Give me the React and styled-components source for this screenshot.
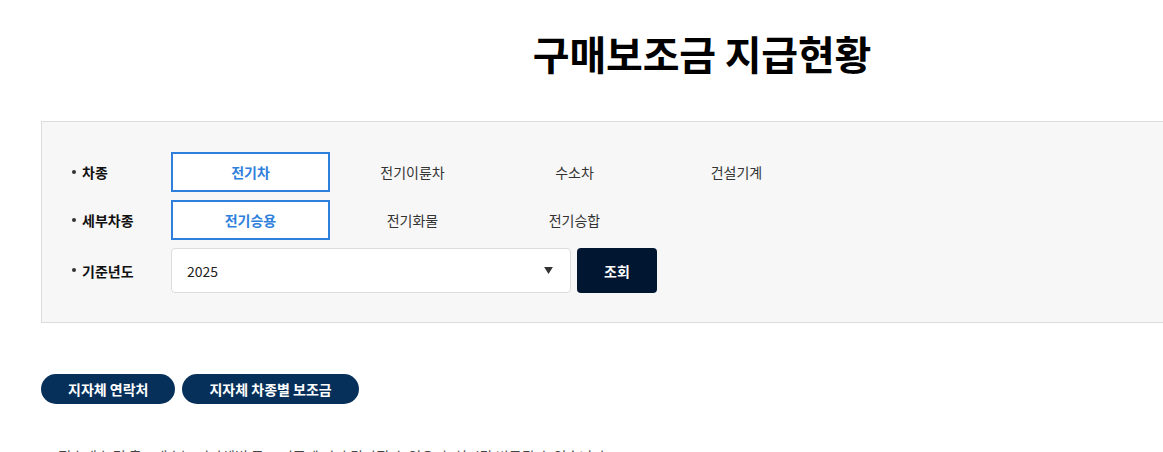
import React, { useState } from "react";
import styled, { createGlobalStyle } from "styled-components";

const GlobalStyle = createGlobalStyle`
  html, body {
    margin: 0;
    padding: 0;
    overflow: hidden;
    background: #fff;
  }
  body {
    font-family: "Noto Sans CJK KR", "Noto Sans", sans-serif;
    color: #222;
  }
  * {
    box-sizing: border-box;
  }
`;

const carTypes = ["전기차", "전기이륜차", "수소차", "건설기계"];
const subTypes = ["전기승용", "전기화물", "전기승합"];

const App = () => {
  const [carType, setCarType] = useState(0);
  const [subType, setSubType] = useState(0);

  return (
    <Page>
      <GlobalStyle />
      <Container>
        <Title>구매보조금 지급현황</Title>

        <SearchBox>
          <Row>
            <Label>차종</Label>
            <TabList>
              {carTypes.map((name, i) => (
                <Tab key={name} active={i === carType} onClick={() => setCarType(i)}>
                  {name}
                </Tab>
              ))}
            </TabList>
          </Row>
          <Row>
            <Label>세부차종</Label>
            <TabList>
              {subTypes.map((name, i) => (
                <Tab key={name} active={i === subType} onClick={() => setSubType(i)}>
                  {name}
                </Tab>
              ))}
            </TabList>
          </Row>
          <Row tall>
            <Label>기준년도</Label>
            <SelectBox>
              <span>2025</span>
              <Arrow viewBox="0 0 10 8">
                <path d="M0 0 H10 L5 8 Z" fill="#333" />
              </Arrow>
            </SelectBox>
            <SearchButton>조회</SearchButton>
          </Row>
        </SearchBox>

        <ButtonGroup>
          <PillButton>지자체 연락처</PillButton>
          <PillButton>지자체 차종별 보조금</PillButton>
        </ButtonGroup>

        <Notice>
          ※ 접수대수 및 출고대수는 지자체별 공고 기준에 따라 달라질 수 있으며, 실시간 변동될 수 있습니다.
        </Notice>
      </Container>
    </Page>
  );
};

const Page = styled.div`
  width: 100%;
  padding-left: 41px;
`;

const Container = styled.div`
  width: 1322px;
`;

const Title = styled.h2`
  margin: 33px 0 48px;
  font-size: 40px;
  line-height: 40px;
  font-weight: 700;
  letter-spacing: -0.2px;
  text-align: center;
  color: #000;
`;

const SearchBox = styled.section`
  display: flex;
  flex-direction: column;
  gap: 8px;
  padding: 30px 30px 29px;
  background: #f7f7f7;
  border: 1px solid #dcdcdc;
`;

const Row = styled.div`
  display: flex;
  align-items: center;
  height: ${(p) => (p.tall ? "45px" : "40px")};
`;

const Label = styled.div`
  display: flex;
  align-items: center;
  width: 99px;
  flex-shrink: 0;
  font-size: 14px;
  font-weight: 700;
  color: #111;

  &:before {
    content: "";
    width: 4px;
    height: 4px;
    border-radius: 50%;
    background: #333;
    margin-right: 6px;
    margin-top: -1px;
  }
`;

const TabList = styled.div`
  display: flex;
  gap: 3px;
`;

const Tab = styled.button`
  width: 159px;
  height: 40px;
  display: flex;
  align-items: center;
  justify-content: center;
  padding: 0;
  font-family: inherit;
  font-size: 14px;
  font-weight: ${(p) => (p.active ? 700 : 400)};
  color: ${(p) => (p.active ? "#2f7fdc" : "#333")};
  background: ${(p) => (p.active ? "#fff" : "transparent")};
  border: 2px solid ${(p) => (p.active ? "#2f7fdc" : "transparent")};
  cursor: pointer;
`;

const SelectBox = styled.div`
  width: 400px;
  height: 45px;
  display: flex;
  align-items: center;
  justify-content: space-between;
  padding: 0 17px 0 15px;
  background: #fff;
  border: 1px solid #dcdcdc;
  border-radius: 4px;
  font-size: 14px;
  color: #222;
`;

const Arrow = styled.svg`
  width: 9px;
  height: 7px;
`;

const SearchButton = styled.button`
  width: 80px;
  height: 45px;
  margin-left: 6px;
  border: none;
  border-radius: 4px;
  background: #011631;
  color: #fff;
  font-family: inherit;
  font-size: 14px;
  font-weight: 700;
  cursor: pointer;
`;

const ButtonGroup = styled.div`
  display: flex;
  gap: 7px;
  margin-top: 51px;
`;

const PillButton = styled.button`
  height: 30px;
  padding: 0 27px;
  border: none;
  border-radius: 15px;
  background: #06305a;
  color: #fff;
  font-family: inherit;
  font-size: 14px;
  font-weight: 700;
  cursor: pointer;
`;

const Notice = styled.p`
  margin: 42px 0 0;
  font-size: 14px;
  line-height: 20px;
  color: #444;
`;

export default App;
